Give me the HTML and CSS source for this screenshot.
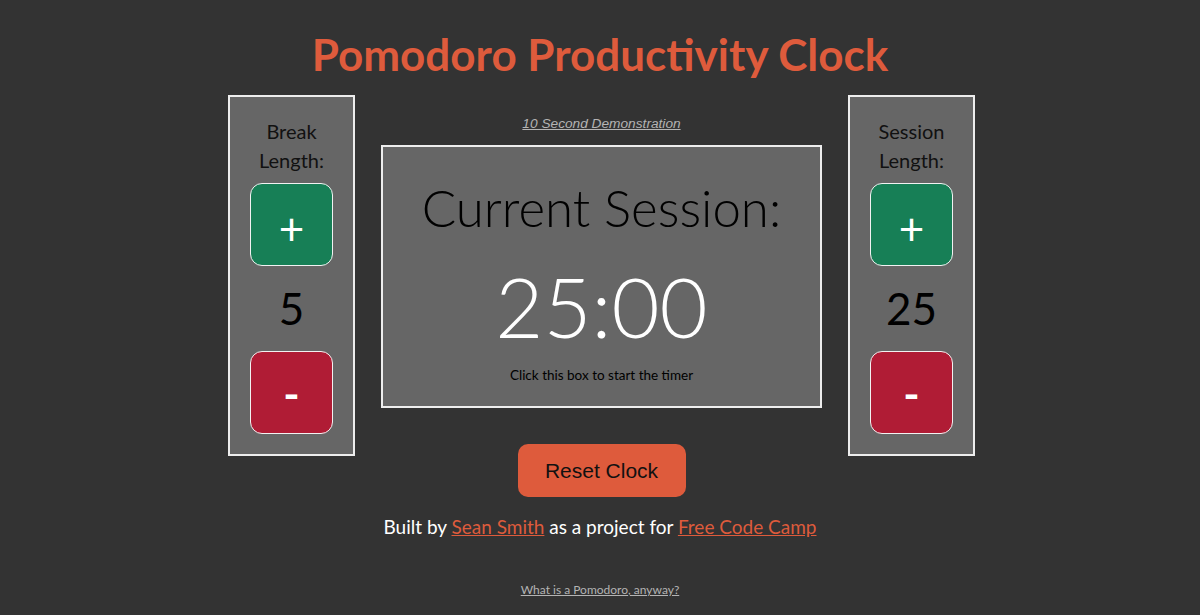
FILE: index.html
```html
<!DOCTYPE html>
<html lang="en">
<head>
<meta charset="utf-8">
<title>Pomodoro Productivity Clock</title>
<link rel="stylesheet" href="styles.css">
</head>
<body>
  <h1 class="title">Pomodoro Productivity Clock</h1>
  <main class="clock-row">
    <section class="control">
      <div class="control-label">Break<br>Length:</div>
      <button class="adj adj-plus" type="button">+</button>
      <div class="control-value">5</div>
      <button class="adj adj-minus" type="button">-</button>
    </section>
    <section class="center">
      <a class="demo-link" href="#">10 Second Demonstration</a>
      <div class="timer-box">
        <div class="timer-label">Current Session:</div>
        <div class="timer-time">25:00</div>
        <div class="timer-hint">Click this box to start the timer</div>
      </div>
      <button class="reset" type="button">Reset Clock</button>
    </section>
    <section class="control">
      <div class="control-label">Session<br>Length:</div>
      <button class="adj adj-plus" type="button">+</button>
      <div class="control-value">25</div>
      <button class="adj adj-minus" type="button">-</button>
    </section>
  </main>
  <p class="credits">Built by <a href="#">Sean Smith</a> as a project for <a href="#">Free Code Camp</a></p>
  <p class="about"><a href="#">What is a Pomodoro, anyway?</a></p>
</body>
</html>
```
FILE: styles.css
```css
html, body {
  margin: 0;
  padding: 0;
}
body {
  background: #333333;
  font-family: Lato, "Noto Sans", sans-serif;
  color: #000;
  height: 615px;
  overflow: hidden;
}
.title {
  margin: 0;
  padding-top: 29px;
  font-size: 44px;
  line-height: 51px;
  font-weight: 700;
  color: #de5b3c;
  text-align: center;
}
.clock-row {
  display: flex;
  justify-content: center;
  align-items: flex-start;
  gap: 26px;
  margin-top: 15px;
  padding-left: 3px;
}
.control {
  width: 123px;
  background: #666666;
  border: 2px solid #eeeeee;
  display: flex;
  flex-direction: column;
  align-items: center;
  padding-top: 20px;
  box-sizing: content-box;
  height: 337px;
}
.control-label {
  font-size: 20px;
  line-height: 29px;
  text-align: center;
  color: #111;
}
.adj {
  width: 83px;
  height: 83px;
  border: 1px solid #f2f2f2;
  border-radius: 12px;
  color: #fff;
  font-family: Lato, sans-serif;
  font-size: 44px;
  line-height: 1;
  padding: 0;
  cursor: pointer;
}
.adj-plus {
  background: #177f56;
  margin-top: 8px;
  padding-top: 6px;
}
.adj-minus {
  background: #b01c35;
  font-weight: 700;
}
.control-value {
  font-size: 44px;
  line-height: 85px;
  color: #000;
}
.center {
  width: 441px;
  display: flex;
  flex-direction: column;
  align-items: center;
}
.demo-link {
  margin-top: 21px;
  font-family: "Liberation Sans", Arial, sans-serif;
  font-style: italic;
  font-size: 13.7px;
  line-height: 16px;
  color: #b4b4b4;
}
.timer-box {
  margin-top: 13px;
  width: 437px;
  height: 259px;
  border: 2px solid #eeeeee;
  background: #666666;
  display: flex;
  flex-direction: column;
  align-items: center;
  cursor: pointer;
}
.timer-label {
  margin-top: 30px;
  font-size: 51px;
  line-height: 62px;
  font-weight: 300;
  color: #000;
}
.timer-time {
  margin-top: 19px;
  font-size: 83px;
  line-height: 96px;
  font-weight: 300;
  color: #fff;
}
.timer-hint {
  margin-top: 13px;
  font-size: 13.5px;
  line-height: 16px;
  color: #000;
}
.reset {
  margin-top: 36px;
  width: 168px;
  height: 53px;
  border: none;
  border-radius: 10px;
  background: #de5b3c;
  color: #111;
  font-family: "Liberation Sans", Arial, sans-serif;
  font-size: 21px;
  cursor: pointer;
}
.credits {
  margin: 18px 0 0;
  text-align: center;
  font-size: 19px;
  line-height: 24px;
  color: #fff;
}
.credits a {
  color: #de5b3c;
}
.about {
  margin: 44px 0 0;
  text-align: center;
  font-size: 12px;
  line-height: 14px;
}
.about a {
  color: #b4b4b4;
}
```
